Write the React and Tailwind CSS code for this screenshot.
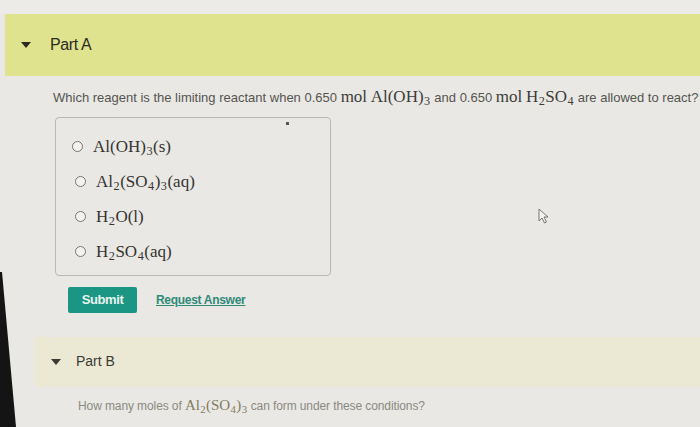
import React from 'react';

// Small inline chem formula renderer: "Al(OH)_3" -> subscripts
const Chem = ({ f, className = '' }) => {
    const parts = f.split(/(_\d)/);
    return (
        <span className={`font-['Liberation_Serif',serif] ${className}`}>
            {parts.map((p, i) =>
                p.startsWith('_') ? (
                    <sub key={i} className="text-[0.72em] relative top-[0.28em] px-[0.5px]">{p.slice(1)}</sub>
                ) : (
                    <span key={i}>{p}</span>
                )
            )}
        </span>
    );
};

const Caret = ({ className = '' }) => (
    <svg width="10" height="6" viewBox="0 0 10 6" className={className}>
        <path d="M0 0h10L5 6z" fill="currentColor" />
    </svg>
);

const options = ['Al(OH)_3(s)', 'Al_2(SO_4)_3(aq)', 'H_2O(l)', 'H_2SO_4(aq)'];

export default function App() {
    return (
        <div className="relative w-[700px] h-[427px] overflow-hidden bg-[#e9e8e5] font-['Liberation_Sans',Arial,sans-serif]">
            <div className="h-[14px] bg-[#ecebe8]" />

            {/* Part A header */}
            <div className="ml-[5px] h-[62px] bg-[#dfe38e] flex items-center">
                <Caret className="ml-[16px] text-[#2a2a22]" />
                <span className="ml-[19px] text-[16px] text-[#2b2b25] font-medium tracking-[-0.4px]">Part A</span>
            </div>

            <div className="pl-[53px] pt-[8px] text-[13px] text-[#55554f] whitespace-nowrap">
                Which reagent is the limiting reactant when 0.650{' '}
                <span className="font-['Liberation_Serif',serif] text-[17px] text-[#3d3d38]">mol</span>{' '}
                <Chem f="Al(OH)_3" className="text-[17px] text-[#3d3d38]" /> and 0.650{' '}
                <span className="font-['Liberation_Serif',serif] text-[17px] text-[#3d3d38]">mol</span>{' '}
                <Chem f="H_2SO_4" className="text-[17px] text-[#3d3d38]" /> are allowed to react?
            </div>

            {/* answer choices */}
            <div className="relative ml-[55px] mt-[7px] w-[276px] h-[159px] border border-[#b9b8b2] rounded-[4px] flex flex-col pl-[16px] pt-[16px] gap-[9px]">
                <span className="absolute left-[230px] top-[4px] w-[3px] h-[3px] bg-[#55554f]" />
                {options.map((o, i) => (
                    <label key={o} className={`flex items-center gap-[10px] h-[26px] ${i > 0 ? 'pl-[3px]' : ''}`}>
                        <span className="w-[11px] h-[11px] rounded-full border border-[#77766f] bg-[#f3f2ee]" />
                        <Chem f={o} className="text-[17px] text-[#35342f]" />
                    </label>
                ))}
            </div>

            {/* actions */}
            <div className="flex items-center ml-[68px] mt-[11px] gap-[19px]">
                <button className="w-[69px] h-[26px] rounded-[2px] bg-[#1b9584] text-[#e8f4ef] text-[13px] font-bold tracking-[-0.4px]">
                    Submit
                </button>
                <span className="text-[12px] text-[#2f8a78] underline font-bold tracking-[-0.3px]">Request Answer</span>
            </div>

            {/* Part B header */}
            <div className="ml-[35px] mt-[24px] h-[50px] bg-[#ebe9d3] flex items-center">
                <Caret className="ml-[16px] text-[#3a3a36]" />
                <span className="ml-[15px] text-[14px] text-[#3a3a36] font-medium">Part B</span>
            </div>

            <div className="pl-[78px] pt-[7px] text-[12px] text-[#8a8a80] whitespace-nowrap tracking-[-0.1px]">
                How many moles of <Chem f="Al_2(SO_4)_3" className="text-[15px] text-[#807c5c]" /> can form under these conditions?
            </div>

            {/* mouse pointer */}
            <svg className="absolute left-[538px] top-[208px]" width="11" height="16" viewBox="0 0 11 16">
                <path d="M1 1v12l3-3 2.5 5 2-1-2.5-5H10z" fill="#f2f2f0" stroke="#6a6a66" strokeWidth="0.9" />
            </svg>

            {/* monitor bezel edge at the lower left */}
            <div className="absolute left-0 top-[272px] w-[16px] h-[155px] bg-[#141414] [clip-path:polygon(0_0,2px_0,16px_100%,0_100%)]" />
        </div>
    );
}
